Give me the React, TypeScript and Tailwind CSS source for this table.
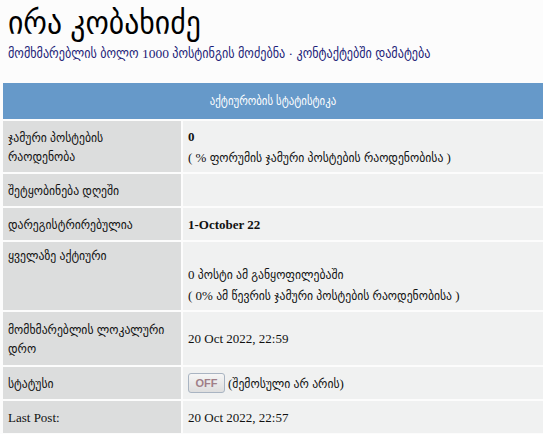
import React from "react";

const font = { fontFamily: '"Liberation Serif", "DejaVu Sans Condensed", "DejaVu Sans", serif' };

const rows: { label: React.ReactNode; value: React.ReactNode; h: string }[] = [
  {
    label: (
      <>
        ჯამური პოსტების
        <br />
        რაოდენობა
      </>
    ),
    value: (
      <>
        <div className="font-bold">0</div>
        <div>( % ფორუმის ჯამური პოსტების რაოდენობისა )</div>
      </>
    ),
    h: "h-[51px]",
  },
  { label: "შეტყობინება დღეში", value: "", h: "h-[32px]" },
  { label: "დარეგისტრირებულია", value: <span className="font-bold">1-October 22</span>, h: "h-[32px]" },
  {
    label: <div className="self-start pt-[4px]">ყველაზე აქტიური</div>,
    value: (
      <div className="pt-[17px]">
        <div>0 პოსტი ამ განყოფილებაში</div>
        <div>( 0% ამ წევრის ჯამური პოსტების რაოდენობისა )</div>
      </div>
    ),
    h: "h-[68px]",
  },
  {
    label: (
      <>
        მომხმარებლის ლოკალური
        <br />
        დრო
      </>
    ),
    value: "20 Oct 2022, 22:59",
    h: "h-[53px]",
  },
  {
    label: "სტატუსი",
    value: (
      <span className="flex items-center gap-[3px]">
        <span className="inline-flex h-[20px] w-[37px] items-center justify-center rounded-[3px] border border-[#a9b4c2] bg-gradient-to-b from-[#f6f6f6] to-[#dedede] text-[11px] font-bold text-[#a07f88] font-['Liberation_Sans',sans-serif]">
          OFF
        </span>
        (შემოსული არ არის)
      </span>
    ),
    h: "h-[32px]",
  },
  { label: "Last Post:", value: "20 Oct 2022, 22:57", h: "h-[32px]" },
];

export default function App() {
  return (
    <div className="min-h-[434px] w-[543px] overflow-hidden bg-[#fcfcfc] text-[#111]" style={font}>
      <div className="px-[8px] pt-[3px]">
        <h1 className="text-[33px] leading-[40px] text-black">ირა კობახიძე</h1>
        <div className="mt-[1px] text-[13.5px] text-[#1c1c78]">
          მომხმარებლის ბოლო 1000 პოსტინგის მოძებნა · კონტაქტებში დამატება
        </div>
      </div>
      <div className="ml-[3px] mt-[19px] w-[540px]">
        <div className="flex h-[36px] items-center justify-center bg-[#6699c9] text-[12px] text-white">
          აქტიურობის სტატისტიკა
        </div>
        {rows.map((r, i) => (
          <div key={i} className={`mt-[2px] flex text-[13px] ${r.h}`}>
            <div className="flex w-[178px] items-center bg-[#dcdddd] px-[5px] leading-[19px]">
              {r.label}
            </div>
            <div className="ml-[2px] flex flex-1 items-center bg-[#f0f1f1] px-[5px] leading-[21px]">
              <div>{r.value}</div>
            </div>
          </div>
        ))}
      </div>
    </div>
  );
}
